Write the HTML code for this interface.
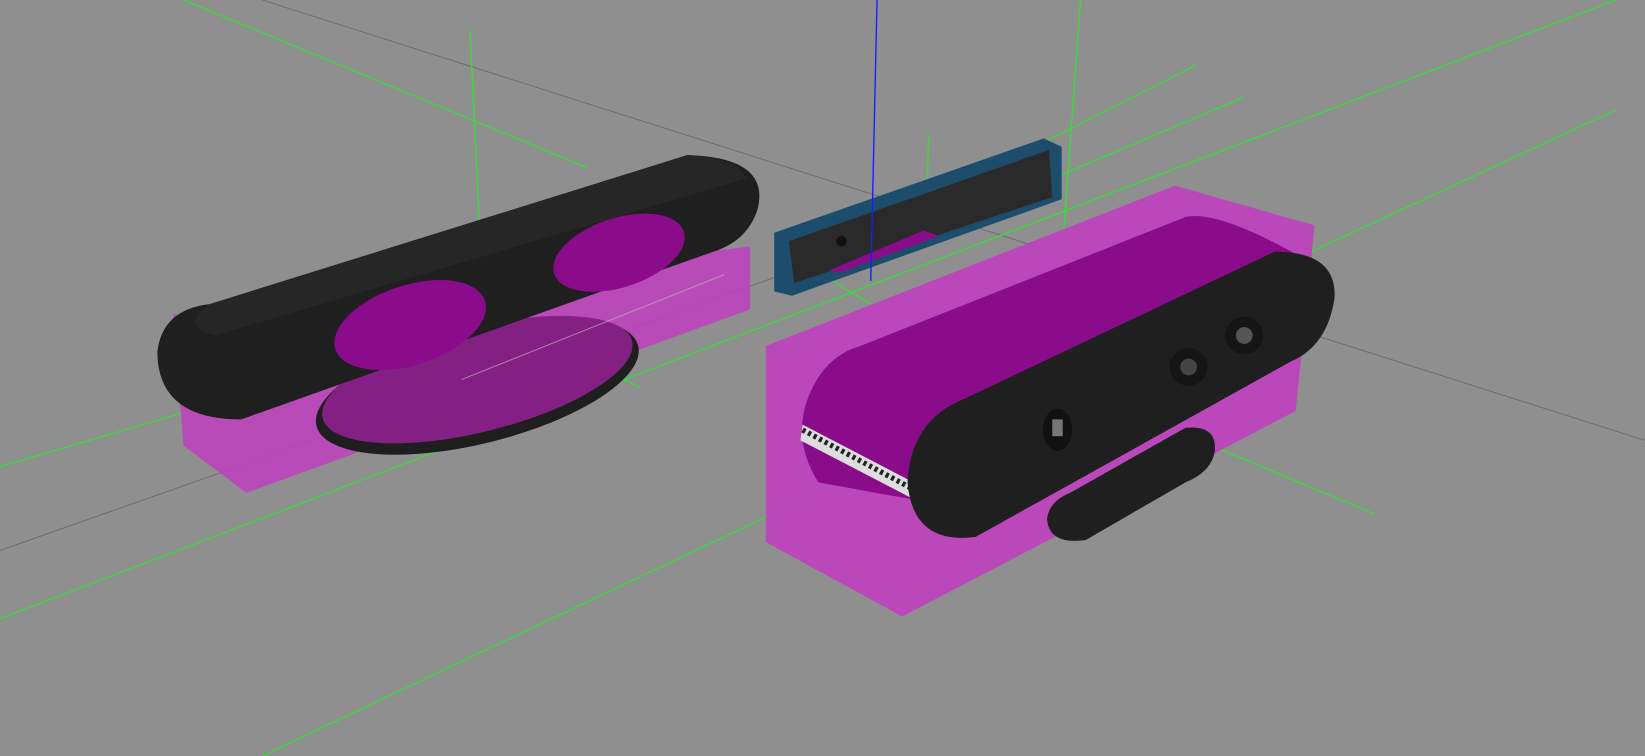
<!DOCTYPE html>
<html><head><meta charset="utf-8"><style>
html,body{margin:0;padding:0;background:#8f8f8f;overflow:hidden}
svg{display:block}
</style></head><body>
<svg width="1645" height="756" viewBox="0 0 1568 721" preserveAspectRatio="none" xmlns="http://www.w3.org/2000/svg">
<rect width="1568" height="721" fill="#8f8f8f"/>
<g stroke="#6e6e6e" stroke-width="1" fill="none">
<line x1="250" y1="0" x2="1568" y2="420"/>
<line x1="0" y1="525" x2="780" y2="250"/>
</g>
<g stroke="#33e033" stroke-width="1.2" fill="none">
<line x1="175" y1="0" x2="560" y2="160"/>
<line x1="0" y1="445" x2="340" y2="345"/>
<line x1="0" y1="590" x2="1540" y2="0"/>
<line x1="250" y1="721" x2="800" y2="460"/>
<line x1="760" y1="255" x2="1140" y2="62"/>
<line x1="770" y1="270" x2="1185" y2="93"/>
<line x1="1250" y1="240" x2="1540" y2="105"/>
<line x1="448" y1="28" x2="457" y2="215"/>
<line x1="1030" y1="0" x2="1010" y2="275"/>
<line x1="885" y1="128" x2="884" y2="178"/>
<line x1="500" y1="312" x2="610" y2="370"/>
<line x1="1095" y1="400" x2="1310" y2="490"/>
<line x1="895" y1="205" x2="910" y2="212"/>
<line x1="780" y1="260" x2="830" y2="290"/>
</g>
<polygon points="165,300 715,235 715,295 235,470 175,425" fill="#c040c0" opacity="0.85"/>
<ellipse cx="455" cy="368" rx="158" ry="55" transform="rotate(-14 455 368)" fill="#1e1e1e"/>
<ellipse cx="455" cy="362" rx="152" ry="50" transform="rotate(-14 455 362)" fill="#8a208a" opacity="0.95"/>
<path d="M200,290 L655,148 Q735,150 722,200 Q712,230 680,240 L230,400 Q150,400 150,335 Q155,295 200,290 Z" fill="#1f1f1f"/>
<path d="M200,290 L655,148 Q700,150 712,170 L205,320 Q170,310 200,290 Z" fill="#262626"/>
<ellipse cx="391" cy="310" rx="75" ry="38" transform="rotate(-18 391 310)" fill="#8a0c8a"/>
<ellipse cx="590" cy="241" rx="65" ry="33" transform="rotate(-18 590 241)" fill="#8a0c8a"/>
<line x1="440" y1="362" x2="690" y2="262" stroke="#c0c0c0" stroke-width="1" opacity="0.6"/>
<polygon points="738,222 995,132 1012,140 1012,190 755,282 738,278" fill="#1d4d6c"/>
<polygon points="752,230 1000,143 1003,188 757,270" fill="#2a2a2a"/>
<polygon points="790,258 880,220 895,225 800,260" fill="#8a0c8a"/>
<circle cx="802" cy="230" r="5" fill="#111"/>
<line x1="836" y1="0" x2="830" y2="268" stroke="#1020ff" stroke-width="1.3"/>
<polygon points="730,330 1120,177 1253,215 1235,392 860,588 730,517" fill="#c040c0" opacity="0.9"/>
<path d="M820,330 L1130,207 Q1160,200 1240,245 L900,430 L890,480 L780,460 Q755,420 770,380 Q785,340 820,330 Z" fill="#8a0c8a"/>
<path d="M765,405 L890,470 L888,485 L763,420 Z" fill="#dddddd"/>
<path d="M765,410 L888,476" stroke="#222" stroke-width="5" stroke-dasharray="3 3"/>
<path d="M920,380 L1215,240 Q1275,240 1272,285 Q1265,330 1230,345 L930,512 Q870,520 865,460 Q868,400 920,380 Z" fill="#1f1f1f"/>
<path d="M1020,470 L1130,408 Q1160,405 1158,430 Q1155,450 1130,460 L1035,515 Q1000,520 998,495 Q1000,478 1020,470 Z" fill="#1f1f1f"/>
<ellipse cx="1008" cy="410" rx="14" ry="20" fill="#111"/>
<rect x="1003" y="400" width="10" height="16" fill="#777"/>
<circle cx="1133" cy="350" r="18" fill="#151515"/><circle cx="1133" cy="350" r="8" fill="#444"/>
<circle cx="1186" cy="320" r="18" fill="#151515"/><circle cx="1186" cy="320" r="8" fill="#555"/>
</svg>
</body></html>
